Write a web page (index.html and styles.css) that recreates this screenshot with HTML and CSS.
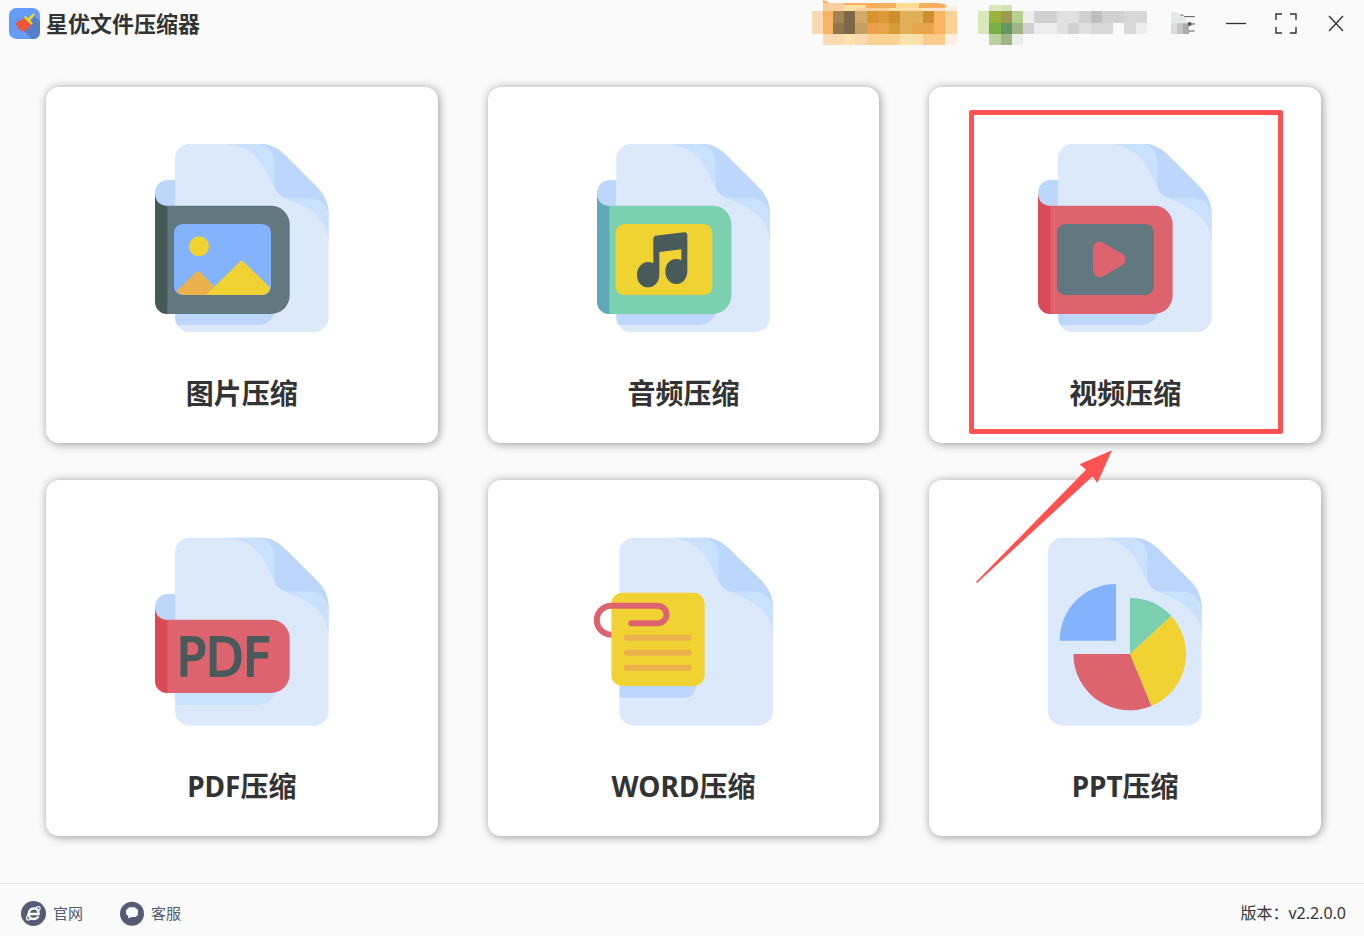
FILE: index.html
```html
<!DOCTYPE html>
<html lang="zh-CN">
<head>
<meta charset="utf-8">
<meta name="viewport" content="width=device-width, initial-scale=1">
<title>星优文件压缩器</title>
<link rel="stylesheet" href="styles.css">
</head>
<body>
<svg class="defs" aria-hidden="true">
  <symbol id="page" viewBox="0 0 700 700" overflow="visible">
    <path fill="#dce9fb" d="M149 42H360C392 42 416 56 438 78L530 170C555 195 566 222 566 255V562a44 44 0 0 1-44 44H149a44 44 0 0 1-44-44V86a44 44 0 0 1 44-44z"/>
    <path fill="#cae1fe" d="M255 42C330 45 362 90 383 132C400 166 408 194 438 206C490 226 566 255 566 342V255C566 222 555 195 530 170L438 78C416 56 392 42 360 42z"/>
    <path fill="#bcd7fb" d="M355 42C385 46 403 66 403 98V168C408 190 425 204 452 204H512C545 206 566 230 566 262V255C566 222 555 195 530 170L438 78C416 56 392 42 360 42z"/>
  </symbol>
  <symbol id="cast" viewBox="0 0 700 700" overflow="visible">
    <path d="M105 540V562Q105 576 112 585H358Q390 583 405 550V540z"/>
  </symbol>
</svg>

<header class="titlebar">
  <div class="brand">
    <svg class="logo" viewBox="0 0 93 93" aria-hidden="true">
      <rect width="93" height="93" rx="22" fill="#659df6"/>
      <path fill="#557fc8" d="M76 24L93 40V71Q93 93 71 93H68L46 70z"/>
      <path fill="#ee5535" d="M46 29L66 49Q64 58 56 64L53 59 53 67 45 71 43 64 40 70 34 68 36 61 30 65 24 58 30 54 23 53 18 44 27 45 23 39Q37 40 46 29z"/>
      <path fill="none" stroke="#fbd51d" stroke-width="7" stroke-linecap="round" d="M49 28L67 46M59 35L73 20"/>
    </svg>
    <h1 class="app-name">星优文件压缩器</h1>
  </div>
  <div class="tools">
    <button class="tool" type="button" aria-label="会员">
      <svg width="145" height="45" viewBox="39 0 435 135" shape-rendering="crispEdges">
        <path fill="#fce4c8" d="M72 24H438V33H72z"/>
        <path fill="#f7ae5d" shape-rendering="auto" d="M72 0L90 7 88 9H410Q432 10 445 17L438 24H72z"/>
        <path fill="#fde0a4" d="M135 15h66v18h-66zM270 24h102v9H270z"/>
        <path fill="#fbdc93" d="M290 9h70v15h-70z"/>
        <path fill="#f9cfa0" d="M72 9h63v24H72zM168 24h102v9H168z"/>
        <path fill="#f8d9b3" d="M39 33h33v68H39z"/><path fill="#f8b462" d="M72 33h30v68H72zM405 33h33v68h-33z"/>
        <path fill="#a48453" d="M102 33h33v36h-33z"/><path fill="#90764d" d="M102 69h33v32h-33z"/>
        <path fill="#7c6848" d="M135 33h33v68h-33z"/><path fill="#d2aa69" d="M168 33h36v36h-36z"/><path fill="#c3a064" d="M168 69h36v32h-36z"/>
        <path fill="#d7932e" d="M204 33h33v36h-33z"/><path fill="#dc9a37" d="M237 33h33v36h-33z"/><path fill="#ed9e4a" d="M204 69h33v32h-33z"/><path fill="#e7a44b" d="M237 69h33v32h-33z"/>
        <path fill="#cf8e2c" d="M270 33h33v36h-33zM372 33h33v36h-33z"/><path fill="#d59b37" d="M270 69h33v32h-33z"/>
        <path fill="#dfb057" d="M303 33h69v68h-69z"/><path fill="#e6a549" d="M339 69h66v32h-66z"/>
        <path fill="#fad197" d="M438 33h36v68h-36z"/><path fill="#faefe1" d="M438 17h36v16h-36zM438 101h36v34h-36z"/>
        <path fill="#fbdab1" d="M72 101h132v34H72z"/><path fill="#fde4ae" d="M135 101h33v34h-33zM303 101h36v34h-36z"/>
        <path fill="#fbd292" d="M204 101h99v34h-99z"/><path fill="#fce0a9" d="M339 101h33v34h-33z"/><path fill="#fbcb8d" d="M372 101h66v34h-66z"/>
      </svg>
    </button>
    <button class="tool" type="button" aria-label="用户">
      <svg width="169" height="45" viewBox="540 0 507 135" shape-rendering="crispEdges">
        <path fill="#d9e8bb" d="M573 15h36v18h-36zM540 33h33v68h-33z"/><path fill="#d2e2b0" d="M609 15h33v18h-33z"/>
        <path fill="#9ab23e" d="M573 33h36v36h-36z"/><path fill="#9e9a50" d="M609 33h33v36h-33z"/><path fill="#b6cf8e" d="M642 33h33v36h-33z"/>
        <path fill="#78ad48" d="M573 69h36v32h-36z"/><path fill="#659561" d="M609 69h33v32h-33z"/><path fill="#9fb586" d="M642 69h33v32h-33zM609 101h33v34h-33z"/>
        <path fill="#bad29e" d="M573 101h36v34h-36z"/><path fill="#eceee8" d="M642 101h33v34h-33z"/><path fill="#ededee" d="M675 33h33v36h-33zM708 69h69v32h-69zM1014 69h33v32h-33z"/>
        <path fill="#d1d1d1" d="M708 33h69v36h-69zM675 69h33v32h-33zM843 33h204v36H843zM810 69h33v32h-33z"/>
        <path fill="#e0e0e0" d="M777 33h66v36h-66zM777 69h33v32h-33zM843 69h36v32h-36z"/>
        <path fill="#bfbfbf" d="M879 33h33v36h-33z"/><path fill="#d8d8d8" d="M879 69h66v32h-66zM978 69h36v32h-36zM978 33h69v36h-69z"/>
      </svg>
    </button>
    <div class="window-controls">
      <button class="tool" type="button" aria-label="菜单">
        <svg width="30" height="24" viewBox="54 35 90 72">
          <path fill="#e7e8e8" d="M63 33Q82 34 95 45Q110 55 117 69V101H63z"/><path fill="#dcdcdc" d="M63 69h36v32H63z"/><path fill="#c5c6c6" d="M81 69h18v32H81z"/><path fill="#aaabac" d="M99 69h18v32H99z"/>
          <path stroke="#555" stroke-width="3" d="M92 44l8 1M102 49h32M117 71h18M117 92h17"/><circle cx="119" cy="71" r="6" fill="#555"/>
        </svg>
      </button>
      <button class="tool" type="button" aria-label="最小化">
        <svg width="24" height="24" viewBox="0 0 24 24"><path stroke="#333" stroke-width="1.3" d="M2 11.5h20"/></svg>
      </button>
      <button class="tool" type="button" aria-label="最大化">
        <svg width="24" height="24" viewBox="0 0 24 24"><path fill="none" stroke="#333" stroke-width="1.4" d="M2 8V2H8M16 2H22V8M22 15V21H16M8 21H2V15"/></svg>
      </button>
      <button class="tool" type="button" aria-label="关闭">
        <svg width="24" height="24" viewBox="0 0 24 24"><path stroke="#333" stroke-width="1.4" d="M5 4l14 15M19 4l-14 15"/></svg>
      </button>
    </div>
  </div>
</header>

<main class="grid">
  <button class="card" type="button">
    <svg class="icon" viewBox="6 21 600 600" aria-hidden="true">
      <path fill="#bcd7fb" d="M105 150H82a37 39 0 0 0 0 78H105z"/>
      <use href="#page" width="700" height="700"/>
      <use href="#cast" width="700" height="700" fill="#bcd7fb"/>
      <path fill="#617880" d="M80 227H393a56 56 0 0 1 56 56V495a56 56 0 0 1-56 57H80z"/>
      <path fill="#455959" d="M45 190Q47 225 82 228V552a36 36 0 0 1-37-37z"/>
      <rect x="102" y="282" width="291" height="213" rx="26" fill="#82b3fc"/>
      <circle cx="177" cy="349" r="30" fill="#f0d333"/>
      <path fill="#eab14d" d="M110 483L168 427Q174 421 181 427L221 467 205 495H130Q116 494 110 483z"/>
      <path fill="#f0d333" d="M198 495L301 394Q306 390 311 395L391 473Q386 494 366 495z"/>
    </svg>
    <span class="label">图片压缩</span>
  </button>

  <button class="card" type="button">
    <svg class="icon" viewBox="9 21 600 600" aria-hidden="true">
      <path fill="#bcd7fb" d="M110 150H88a37 39 0 0 0 0 78H110z"/>
      <use href="#page" x="4" width="700" height="700"/>
      <use href="#cast" x="4" width="700" height="700" fill="#bcd7fb"/>
      <path fill="#7bd0b0" d="M85 227H398a56 56 0 0 1 56 56V495a56 56 0 0 1-56 57H85z"/>
      <path fill="#60aab8" d="M51 190Q53 225 88 228V552a36 36 0 0 1-37-37z"/>
      <rect x="107" y="282" width="290" height="213" rx="26" fill="#f0d333"/>
      <path fill="#485a5a" d="M220 325Q220 319 227 317L312 307Q321 306 322 315V423C322 445 309 462 289 462C269 462 256 446 256 424C256 403 270 387 288 387Q297 387 304 391V358L238 366V434C238 456 223 472 204 472C185 472 171 456 171 434C171 413 186 396 204 396Q213 396 220 400z"/>
    </svg>
    <span class="label">音频压缩</span>
  </button>

  <div class="card-wrap">
    <button class="card" type="button">
      <svg class="icon" viewBox="315 183 600 600" aria-hidden="true">
        <path fill="#bcd7fb" d="M414 312H391a37 39 0 0 0 0 78H414z"/>
        <use href="#page" x="309" y="162" width="700" height="700"/>
        <use href="#cast" x="309" y="162" width="700" height="700" fill="#bcd7fb"/>
        <path fill="#dd636e" d="M389 389H702a56 56 0 0 1 56 56V657a56 56 0 0 1-56 57H389z"/>
        <path fill="#d94a56" d="M354 352Q356 387 391 390V714a36 36 0 0 1-37-37z"/>
        <rect x="411" y="444" width="291" height="213" rx="26" fill="#617880"/>
        <path fill="#dd636e" d="M519 518C519 501 537 492 551 501L606 533Q617 540 617 551Q617 562 606 568L551 600C537 609 519 600 519 583z"/>
      </svg>
      <span class="label">视频压缩</span>
    </button>
    <span class="highlight"></span>
    <svg class="arrow" viewBox="48 30 411 402" aria-hidden="true"><path fill="#fe5252" d="M456 31L412 129 398 109 51 429 48 426 378 89 359 73z"/></svg>
  </div>

  <button class="card" type="button">
    <svg class="icon" viewBox="6 15 600 600" aria-hidden="true">
      <path fill="#bcd7fb" d="M105 207H82a37 39 0 0 0 0 78H105z"/>
      <use href="#page" y="-4" width="700" height="700"/>
      <use href="#cast" y="-45" width="700" height="700" fill="#cae1fe"/>
      <path fill="#dd636e" d="M80 284H393a56 56 0 0 1 56 56V448a56 56 0 0 1-56 56H80z"/>
      <path fill="#d94a56" d="M45 247Q47 282 82 285V504a36 36 0 0 1-37-37z"/>
      <text class="pdf-mark" x="110" y="452">PDF</text>
    </svg>
    <span class="label">PDF压缩</span>
  </button>

  <button class="card" type="button">
    <svg class="icon" viewBox="10 15 600 600" aria-hidden="true">
      <use href="#page" x="14" y="-4" width="700" height="700"/>
      <path fill="#bcd7fb" d="M120 470H349V483Q346 517 316 518H120z"/>
      <rect x="95" y="203" width="280" height="280" rx="34" fill="#f0d333"/>
      <path fill="none" stroke="#eab14d" stroke-width="18" stroke-linecap="round" d="M141 338H327M141 383H327M141 428H327"/>
      <path fill="none" stroke="#dd636e" stroke-width="18" d="M95 329A43 43 0 0 1 95 242H234a26 26 0 0 1 0 53H155"/>
      <circle cx="155" cy="295" r="9" fill="#dd636e"/>
    </svg>
    <span class="label">WORD压缩</span>
  </button>

  <button class="card" type="button">
    <svg class="icon" viewBox="195 270 600 600" aria-hidden="true">
      <use href="#page" x="159" y="251" width="700" height="700"/>
      <path fill="#82b3fc" d="M468 432V602H299A169 169 0 0 1 468 432z"/>
      <path fill="#7bd0b0" d="M510 642V474A169 169 0 0 1 634 528z"/>
      <path fill="#f0d333" d="M510 642L634 528A169 169 0 0 1 574 798z"/>
      <path fill="#dd636e" d="M510 642L574 798A169 169 0 0 1 340 642z"/>
    </svg>
    <span class="label">PPT压缩</span>
  </button>
</main>

<footer class="statusbar">
  <nav class="links">
    <a class="link" href="#site">
      <svg width="25" height="25" viewBox="0 0 75 75" aria-hidden="true">
        <circle cx="37.500" cy="37.500" r="37.500" fill="#535c74"/>
        <path fill="none" stroke="#fafafa" stroke-width="7" d="M24 39H53Q53 22 39 22Q24 23 23 39Q24 54 39 54Q48 54 52 46"/>
        <path fill="none" stroke="#fafafa" stroke-width="4" d="M44 20Q56 14 57 20Q58 23 55 28M23 36Q14 50 18 56Q22 59 32 53"/>
      </svg>
      <span>官网</span>
    </a>
    <a class="link" href="#support">
      <svg width="24" height="25" viewBox="0 0 72 75" aria-hidden="true">
        <circle cx="36" cy="38" r="36" fill="#535c74"/>
        <path fill="#fafafa" d="M28 19H44L54 26V41L47 48H36L24 52 25 45 18 40V27z"/>
      </svg>
      <span>客服</span>
    </a>
  </nav>
  <span class="version">版本：v2.2.0.0</span>
</footer>
</body>
</html>
```
FILE: styles.css
```css
* {
  box-sizing: border-box;
}

body {
  margin: 0;
  min-height: 100vh;
  display: flex;
  flex-direction: column;
  background: #fafafa;
  color: #333;
  font-family: "Noto Sans", "Noto Sans CJK SC", sans-serif;
}

button {
  font: inherit;
  color: inherit;
  border: 0;
  padding: 0;
  background: none;
  cursor: pointer;
}

svg {
  display: block;
}

.defs {
  position: absolute;
  width: 0;
  height: 0;
}

.titlebar {
  display: flex;
  align-items: flex-start;
  justify-content: space-between;
  height: 47px;
  padding: 0 16px 0 9px;
}

.brand {
  display: flex;
  align-items: flex-start;
  gap: 6px;
  padding-top: 8px;
}

.logo {
  width: 31px;
  height: 31px;
}

.app-name {
  margin: 0;
  font-family: "Noto Sans CJK SC", sans-serif;
  font-size: 22px;
  line-height: 28px;
  font-weight: 700;
}

.tools {
  display: flex;
  align-items: flex-start;
  gap: 21px;
}

.window-controls {
  display: flex;
  align-items: center;
  gap: 26px;
  height: 47px;
}

.grid {
  flex: 1;
  display: grid;
  grid-template-columns: repeat(3, 1fr);
  grid-auto-rows: 356px;
  gap: 37px 50px;
  padding: 40px 43px 47px 46px;
}

.card-wrap {
  position: relative;
  display: flex;
}

.card {
  flex: 1;
  display: flex;
  flex-direction: column;
  align-items: center;
  justify-content: flex-start;
  gap: 36px;
  padding: 50px 0 0;
  background: #fff;
  border-radius: 13px;
  box-shadow: 1px 1px 10px rgba(0, 0, 0, 0.4);
}

.icon {
  width: 200px;
  height: 200px;
}

.label {
  font-size: 28px;
  line-height: 40px;
  font-weight: 700;
}

.pdf-mark {
  font-family: "Liberation Sans Narrow", "DejaVu Sans Condensed", sans-serif;
  font-size: 162px;
  fill: #485a5a;
  stroke: #485a5a;
  stroke-width: 6px;
  stroke-linejoin: round;
}

.highlight {
  position: absolute;
  inset: 23px 38px 9px 40px;
  border: 5px solid #ff5252;
  border-radius: 2px;
  pointer-events: none;
}

.arrow {
  position: absolute;
  z-index: 1;
  left: 47px;
  top: 363px;
  width: 137px;
  height: 134px;
  pointer-events: none;
}

.statusbar {
  display: flex;
  align-items: center;
  justify-content: space-between;
  height: 53px;
  padding: 6px 18px 0 21px;
  border-top: 1px solid #ebebeb;
}

.links {
  display: flex;
  gap: 37px;
}

.link {
  display: flex;
  align-items: center;
  gap: 7px;
  color: #535c74;
  font-family: "Noto Sans CJK SC", sans-serif;
  font-size: 15px;
  line-height: 24px;
  font-weight: 400;
  text-decoration: none;
}

.version {
  font-size: 16px;
  line-height: 24px;
}
```
